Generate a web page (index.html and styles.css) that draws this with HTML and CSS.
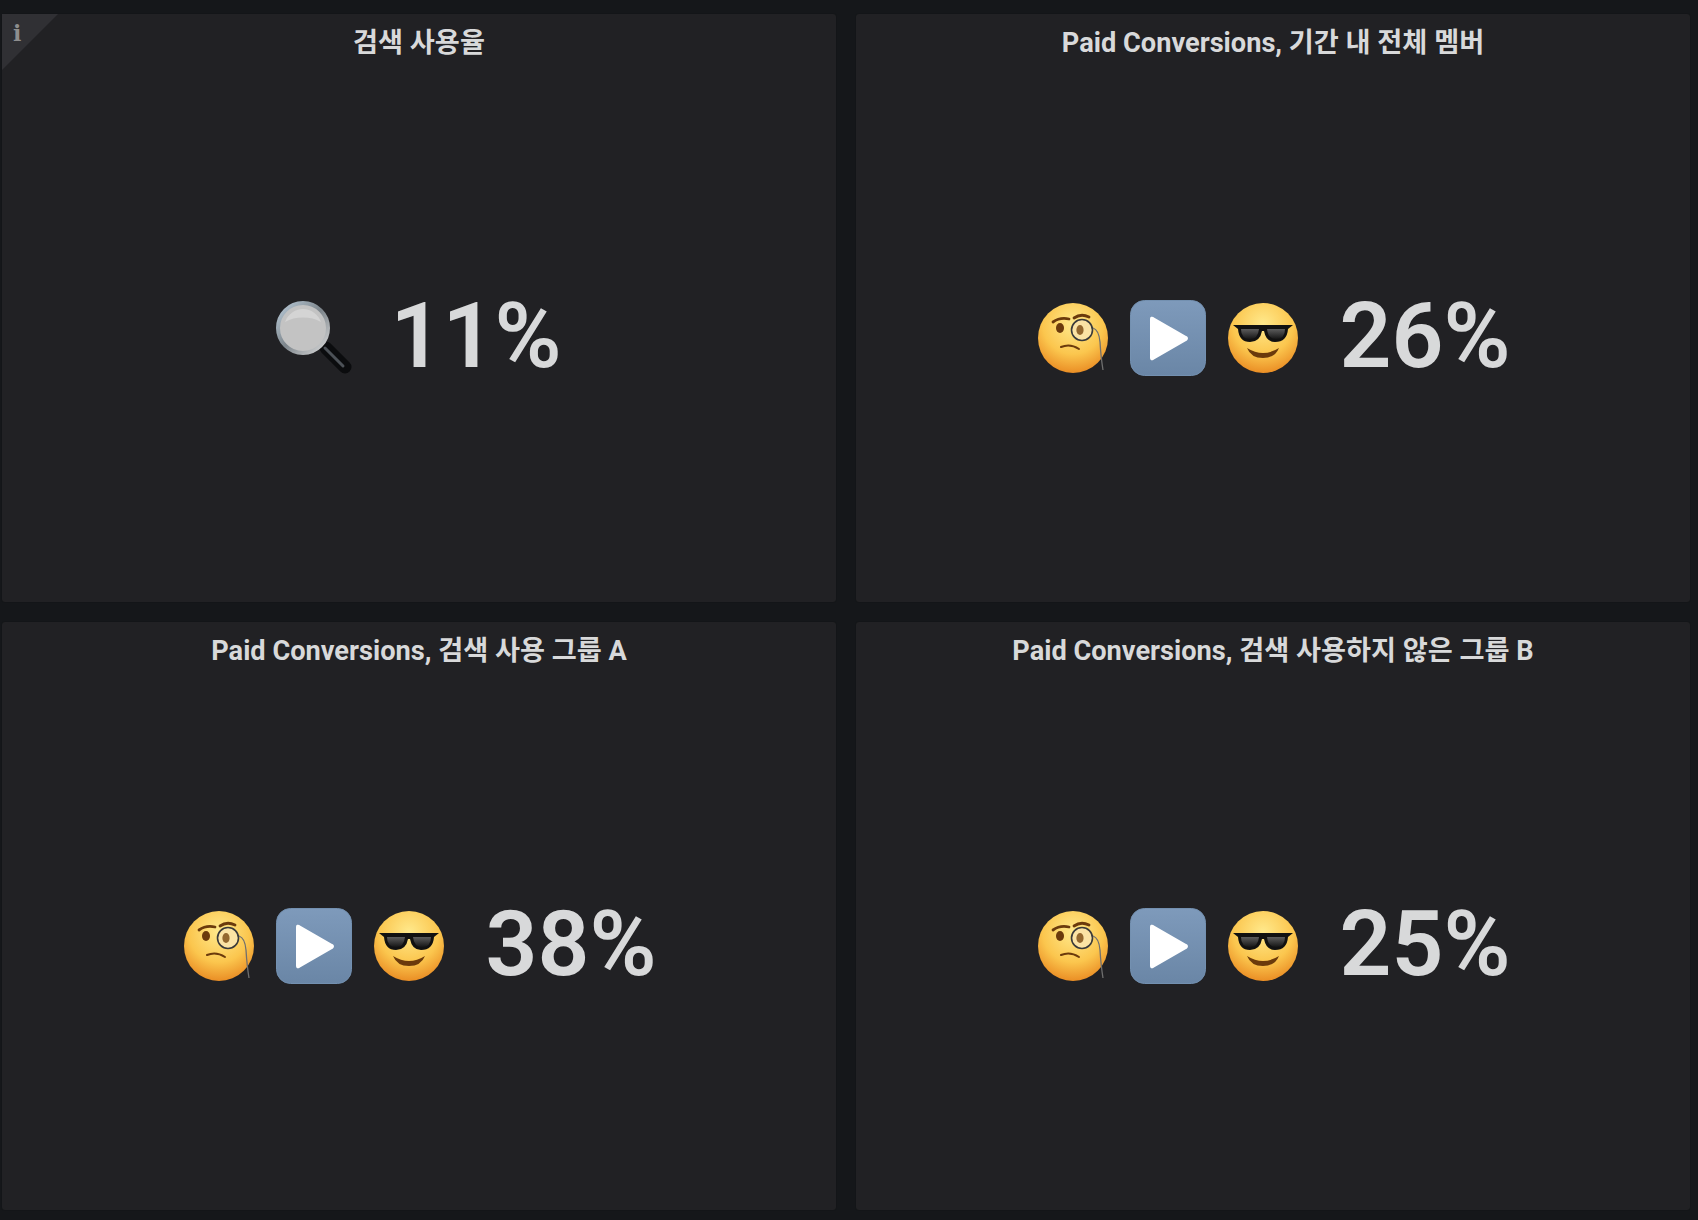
FILE: index.html
```html
<!DOCTYPE html>
<html lang="ko">
<head>
    <meta charset="UTF-8">
    <meta name="viewport" content="width=device-width, initial-scale=1.0">
    <title>검색 사용율</title>
    <link rel="stylesheet" href="styles.css">
</head>
<body>
    <svg class="sprite" aria-hidden="true">
        <defs>
            <radialGradient id="skin" cx="50%" cy="30%" r="72%">
                <stop offset="0" stop-color="#ffe98c"/>
                <stop offset="0.6" stop-color="#fbc64e"/>
                <stop offset="1" stop-color="#e98a22"/>
            </radialGradient>
            <linearGradient id="tile" x1="0" y1="0" x2="0" y2="1">
                <stop offset="0" stop-color="#7e9abb"/>
                <stop offset="1" stop-color="#6a86a6"/>
            </linearGradient>
            <linearGradient id="rim" x1="0" y1="0" x2="1" y2="1">
                <stop offset="0" stop-color="#b9cbd9"/>
                <stop offset="0.5" stop-color="#7d858b"/>
                <stop offset="1" stop-color="#dcdcdc"/>
            </linearGradient>
            <linearGradient id="shade" x1="0" y1="0" x2="0" y2="1">
                <stop offset="0" stop-color="#5c5c5c"/>
                <stop offset="1" stop-color="#161616"/>
            </linearGradient>
            <symbol id="monocle" viewBox="0 0 76 76">
                <circle cx="38" cy="38" r="35" fill="url(#skin)"/>
                <path d="M18 22 Q25 17 34 19" fill="none" stroke="#6b3a0c" stroke-width="2.8" stroke-linecap="round"/>
                <path d="M39 18 Q46 13 54 17" fill="none" stroke="#6b3a0c" stroke-width="2.8" stroke-linecap="round"/>
                <ellipse cx="25" cy="28" rx="4" ry="5" fill="#6b3a0c"/>
                <circle cx="47" cy="30" r="10.5" fill="#fbe3a4" stroke="#3a3a3a" stroke-width="1.6"/>
                <ellipse cx="45" cy="30" rx="3.6" ry="5" fill="#94682e"/>
                <path d="M26 47 Q35 43 44 49" fill="none" stroke="#6b3a0c" stroke-width="2" stroke-linecap="round"/>
                <path d="M58 28 Q64 30 65 42 Q66 58 68 70" fill="none" stroke="#6f6f6f" stroke-width="1.3"/>
            </symbol>
            <symbol id="play" viewBox="0 0 76 76">
                <rect x="0.5" y="0.5" width="75" height="75" rx="14" fill="url(#tile)" stroke="#7390b0"/>
                <path d="M21 19 Q21 17 23 18 L56 37 Q58 38 56 40 L23 59 Q21 60 21 58 Z" fill="#fff" stroke="#fff" stroke-width="2" stroke-linejoin="round"/>
            </symbol>
            <symbol id="cool" viewBox="0 0 76 76">
                <circle cx="38" cy="38" r="35" fill="url(#skin)"/>
                <path d="M8 25 H68 L63 29 Q62 42 50 42 Q41 42 39 31 H37 Q35 42 25 42 Q14 42 13 29 Z" fill="#111"/>
                <path d="M16 29 H34 Q33 39 25 39 Q16 39 16 29 Z" fill="url(#shade)"/>
                <path d="M42 29 H60 Q60 39 51 39 Q43 39 42 29 Z" fill="url(#shade)"/>
                <path d="M22 48 Q38 58 54 48 Q50 58 38 58 Q26 58 22 48 Z" fill="#6b3a0c"/>
            </symbol>
            <symbol id="lens" viewBox="0 0 76 76">
                <path d="M50 48 L69 67" fill="none" stroke="#0b0c0e" stroke-width="13" stroke-linecap="round"/>
                <path d="M49 48 L67 66" fill="none" stroke="#4c5157" stroke-width="3" stroke-linecap="round"/>
                <circle cx="27" cy="28" r="25" fill="#c3c3c3" stroke="url(#rim)" stroke-width="4"/>
                <path d="M9 22 A19 19 0 0 1 45 22 A30 22 0 0 0 9 22 Z" fill="#d4d4d4"/>
            </symbol>
        </defs>
    </svg>

    <div class="dashboard">
        <section class="panel">
            <div class="panel-corner"><span class="corner-icon">i</span></div>
            <h2 class="panel-title">검색 사용율</h2>
            <div class="stat">
                <svg class="emoji"><use href="#lens"/></svg>
                <span class="stat-value">11%</span>
            </div>
        </section>

        <section class="panel">
            <h2 class="panel-title">Paid Conversions, 기간 내 전체 멤버</h2>
            <div class="stat">
                <svg class="emoji"><use href="#monocle"/></svg>
                <svg class="emoji"><use href="#play"/></svg>
                <svg class="emoji"><use href="#cool"/></svg>
                <span class="stat-value">26%</span>
            </div>
        </section>

        <section class="panel">
            <h2 class="panel-title">Paid Conversions, 검색 사용 그룹 A</h2>
            <div class="stat">
                <svg class="emoji"><use href="#monocle"/></svg>
                <svg class="emoji"><use href="#play"/></svg>
                <svg class="emoji"><use href="#cool"/></svg>
                <span class="stat-value">38%</span>
            </div>
        </section>

        <section class="panel">
            <h2 class="panel-title">Paid Conversions, 검색 사용하지 않은 그룹 B</h2>
            <div class="stat">
                <svg class="emoji"><use href="#monocle"/></svg>
                <svg class="emoji"><use href="#play"/></svg>
                <svg class="emoji"><use href="#cool"/></svg>
                <span class="stat-value">25%</span>
            </div>
        </section>
    </div>
</body>
</html>
```

FILE: styles.css
```css
html, body {
    height: 100%;
}
body {
    margin: 0;
    background-color: #15171A;
    color: #D8D9DA;
    font-family: Roboto, "Noto Sans CJK KR", sans-serif;
    overflow: hidden;
}
.sprite {
    position: absolute;
    width: 0;
    height: 0;
}
.dashboard {
    display: grid;
    grid-template-columns: 834px 834px;
    grid-template-rows: 588px 588px;
    gap: 20px;
    padding: 14px 0 0 2px;
}
.panel {
    position: relative;
    display: flex;
    flex-direction: column;
    box-sizing: border-box;
    background-color: #212124;
    border-radius: 3px;
    box-shadow: 0 0 1px #0F1012;
}
.panel-corner {
    position: absolute;
    top: 0;
    left: 0;
    width: 56px;
    height: 56px;
    background-color: #303034;
    clip-path: polygon(0 0, 100% 0, 0 100%);
}
.corner-icon {
    position: absolute;
    top: 7px;
    left: 11px;
    font-family: "DejaVu Serif", serif;
    font-size: 22px;
    font-weight: bold;
    line-height: 24px;
    color: #8E8E8E;
}
.panel-title {
    margin: 0;
    padding-top: 13px;
    font-size: 27.2px;
    font-weight: 700;
    line-height: 32px;
    text-align: center;
}
.stat {
    flex: 1;
    display: flex;
    justify-content: center;
    align-items: center;
    gap: 19px;
    padding-top: 15px;
}
.emoji {
    width: 76px;
    height: 76px;
}
.stat-value {
    margin-left: 19px;
    margin-bottom: 4px;
    font-size: 91px;
    font-weight: 600;
    line-height: 108px;
}
```
